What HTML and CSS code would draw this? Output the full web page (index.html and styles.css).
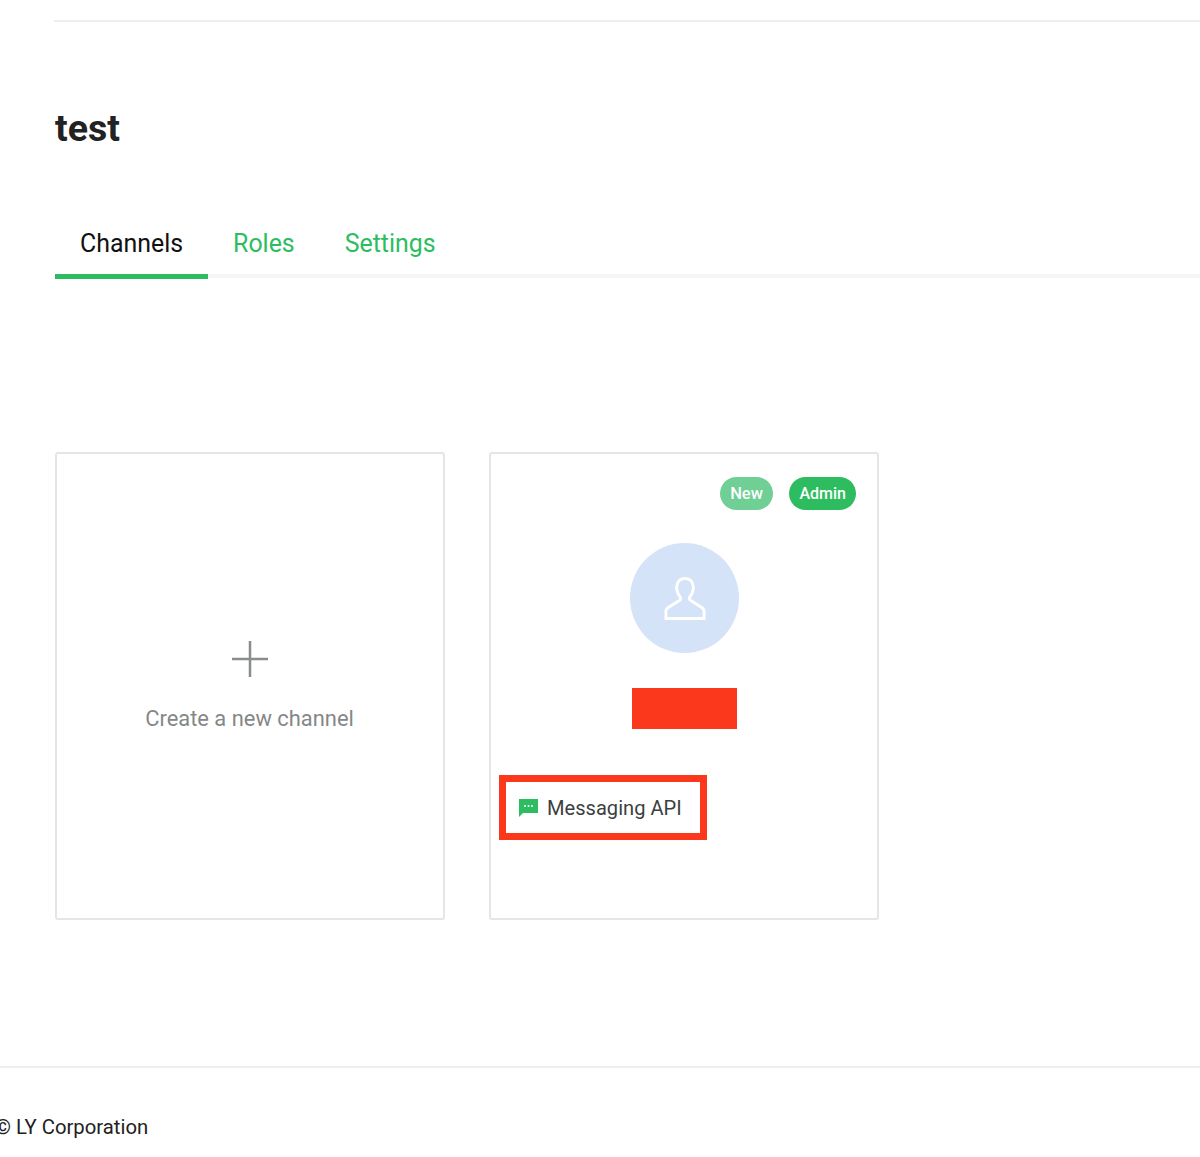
FILE: index.html
```html
<!DOCTYPE html>
<html lang="en">
<head>
    <meta charset="UTF-8">
    <meta name="viewport" content="width=device-width, initial-scale=1.0">
    <title>test</title>
    <link rel="stylesheet" href="styles.css">
</head>
<body>
    <main class="content">
        <h1 class="title">test</h1>
        <nav class="tabs">
            <a class="tab tab-active">Channels</a>
            <a class="tab">Roles</a>
            <a class="tab">Settings</a>
        </nav>
        <div class="cards">
            <div class="card card-create">
                <svg class="plus-icon" width="36" height="36" viewBox="0 0 36 36">
                    <path d="M18 0V36M0 18H36" stroke="#8a8d8d" stroke-width="2.5" fill="none"/>
                </svg>
                <p class="create-label">Create a new channel</p>
            </div>
            <div class="card card-channel">
                <div class="badges">
                    <span class="badge badge-new">New</span>
                    <span class="badge">Admin</span>
                </div>
                <div class="avatar">
                    <svg width="42" height="45" viewBox="0 0 44 46">
                        <path d="M22 2C16.5 2 13.2 6 13.2 11.5C13.2 16 15 19 17 21.5C17.8 22.5 17.6 24 16.4 24.8L4.5 32.5C2.8 33.6 2 35 2 37V44H42V37C42 35 41.2 33.6 39.5 32.5L27.6 24.8C26.4 24 26.2 22.5 27 21.5C29 19 30.8 16 30.8 11.5C30.8 6 27.5 2 22 2Z" stroke="#fff" stroke-width="3" fill="none"/>
                    </svg>
                </div>
                <div class="redacted"></div>
                <div class="channel-type">
                    <svg width="19" height="19" viewBox="0 0 19 19">
                        <path d="M0 1H19V15H4L0 19Z" fill="#2dbd60"/>
                        <circle cx="6" cy="8" r="1" fill="#fff"/>
                        <circle cx="9.5" cy="8" r="1" fill="#fff"/>
                        <circle cx="13" cy="8" r="1" fill="#fff"/>
                    </svg>
                    <span>Messaging API</span>
                </div>
            </div>
        </div>
    </main>
    <footer class="footer">
        <p class="copyright">© LY Corporation</p>
    </footer>
</body>
</html>
```

FILE: styles.css
```css
body {
    margin: 0;
    background-color: #fff;
    font-family: Roboto, "Liberation Sans", sans-serif;
    overflow-x: hidden;
}

.content {
    margin-left: 54px;
    padding-top: 20px;
    height: 1046px;
    background: linear-gradient(#eee, #eee) no-repeat 0 20px / 100% 2px;
}

.title {
    margin: 0 0 0 1px;
    padding-top: 84px;
    font-size: 37.5px;
    line-height: 48px;
    font-weight: 700;
    color: #222;
}

.tabs {
    display: flex;
    margin-top: 64px;
    margin-left: 1px;
    border-bottom: 4px solid #f6f6f6;
}

.tab {
    padding: 0 25px;
    height: 58px;
    margin-bottom: -5px;
    font-size: 24.9px;
    line-height: 56px;
    color: #2dbd60;
}

.tab-active {
    color: #111;
    border-bottom: 5px solid #2dbd60;
}

.cards {
    display: flex;
    gap: 44px;
    margin-top: 174px;
    margin-left: 1px;
}

.card {
    box-sizing: border-box;
    width: 390px;
    height: 468px;
    border: 2px solid #e4e5e5;
    border-radius: 3px;
}

.card-create {
    display: flex;
    flex-direction: column;
    align-items: center;
    padding-top: 187px;
}

.plus-icon {
    display: block;
    margin-right: 1px;
}

.create-label {
    margin: 18px 1px 0 0;
    font-size: 21.9px;
    line-height: 48px;
    color: #858888;
}

.card-channel {
    display: flex;
    flex-direction: column;
    align-items: center;
    padding-top: 23px;
    padding-left: 1px;
}

.badges {
    display: flex;
    justify-content: flex-end;
    gap: 16px;
    align-self: stretch;
    padding-right: 21px;
}

.badge {
    height: 33px;
    padding: 0 10px;
    border-radius: 17px;
    background-color: #2dbd60;
    color: #fff;
    font-size: 16px;
    font-weight: 500;
    line-height: 33px;
}

.badge-new {
    padding: 0 10.5px;
    font-size: 16.5px;
    background-color: #6fcf94;
}

.avatar {
    display: flex;
    align-items: center;
    justify-content: center;
    width: 109px;
    height: 110px;
    margin-top: 33px;
    border-radius: 50%;
    background-color: #d5e3f8;
}

.redacted {
    width: 105px;
    height: 41px;
    margin-top: 35px;
    background-color: #fb371c;
}

.channel-type {
    display: flex;
    align-items: center;
    gap: 9px;
    box-sizing: border-box;
    align-self: flex-start;
    width: 208px;
    height: 65px;
    margin-top: 46px;
    margin-left: 7px;
    padding-left: 13px;
    border: 7px solid #fb371c;
    font-size: 20.1px;
    color: #3c3f40;
}

.footer {
    border-top: 2px solid #eee;
    height: 88px;
}

.copyright {
    margin: 43px 0 0 -5px;
    font-size: 20.3px;
    line-height: 32px;
    color: #222;
}
```
